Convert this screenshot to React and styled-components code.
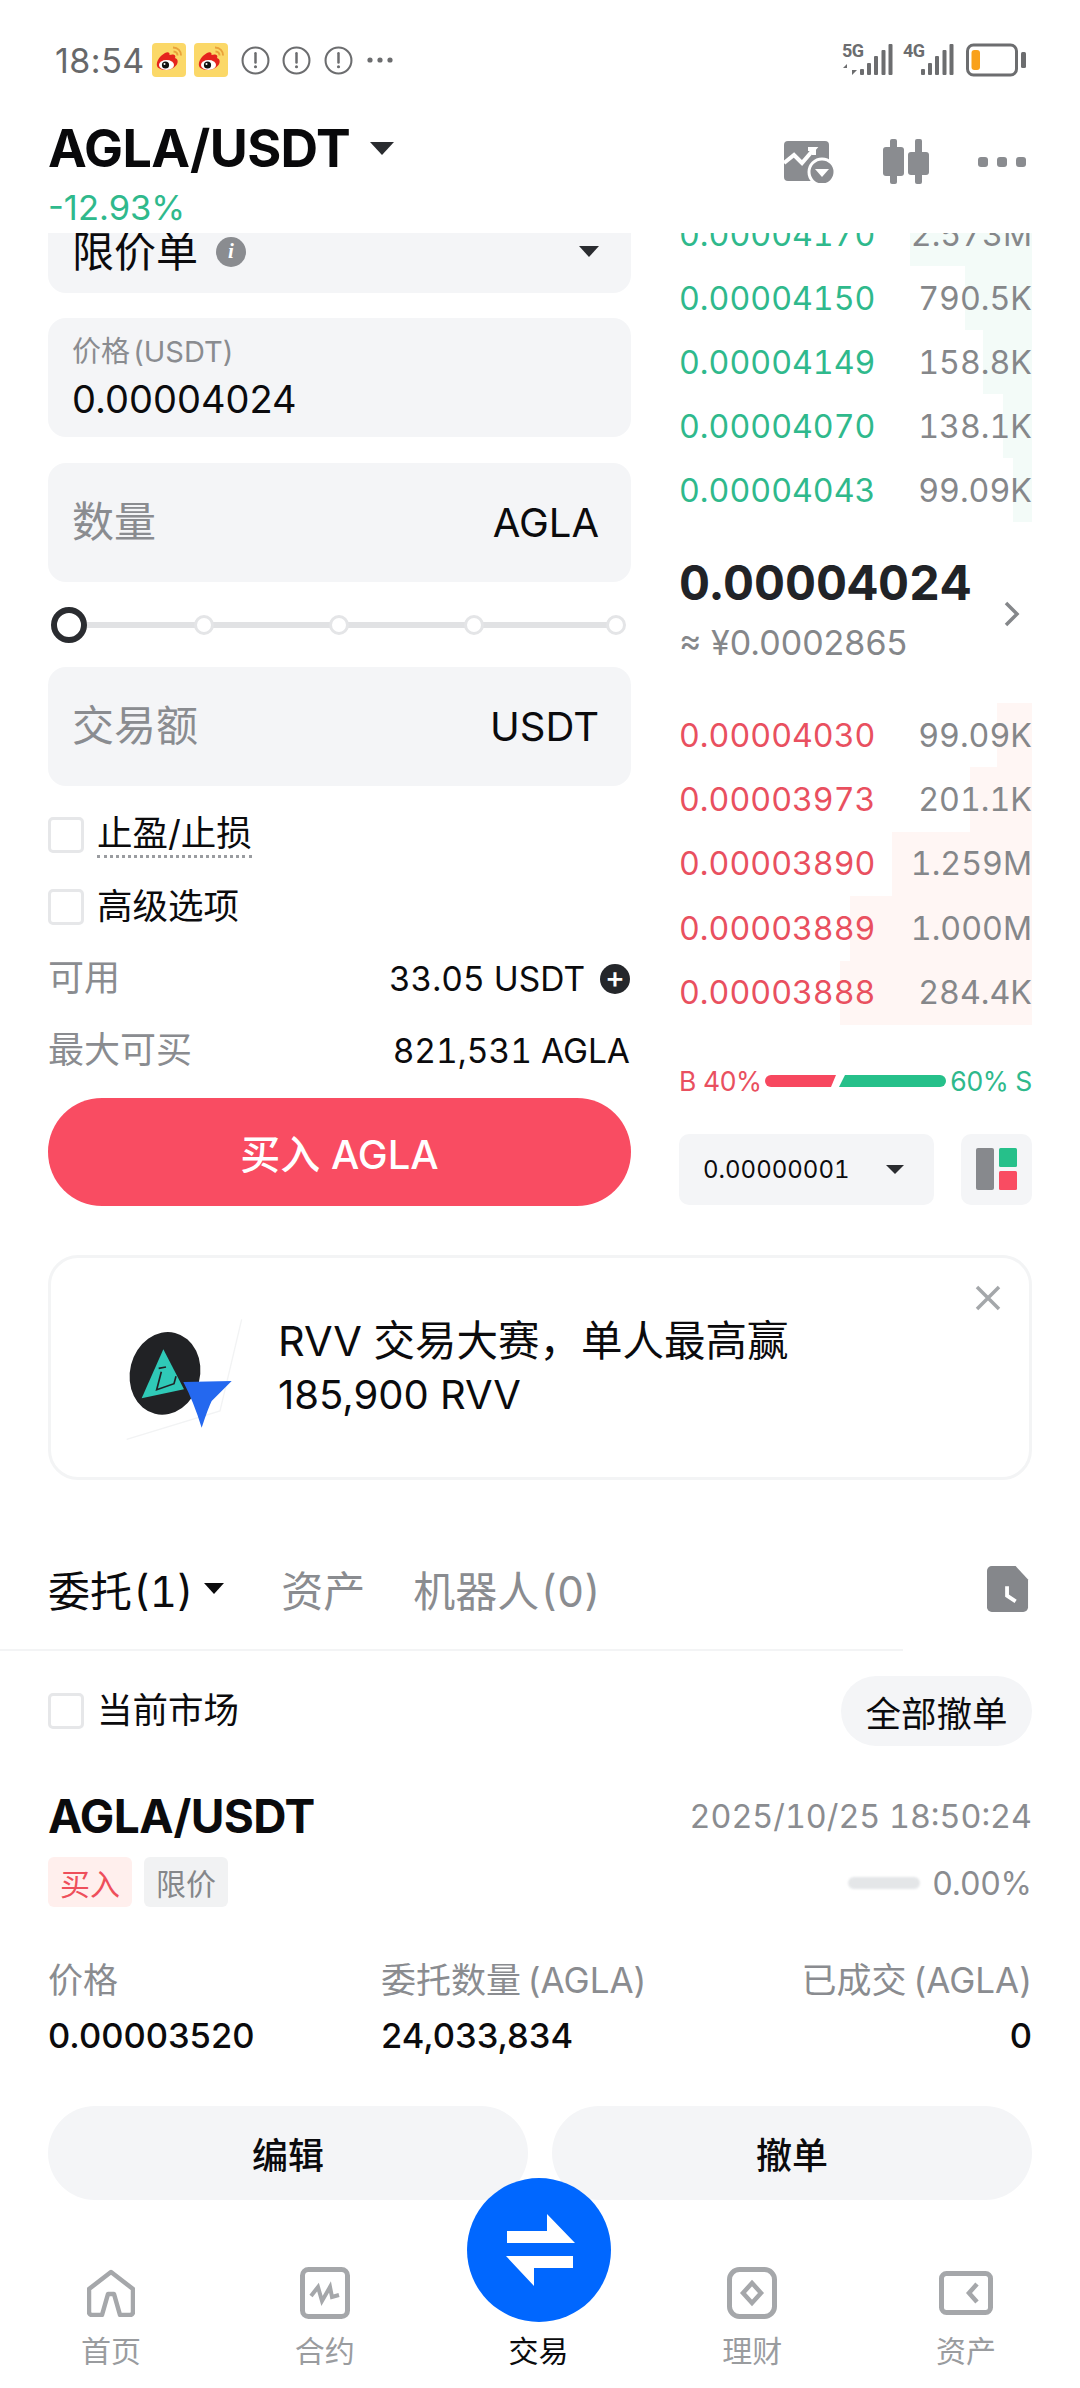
import React from 'react';
import styled, { createGlobalStyle } from 'styled-components';

const Global = createGlobalStyle`
  html, body { margin: 0; padding: 0; background: #fff; }
  * { box-sizing: border-box; }
  body { font-family: Inter, "Noto Sans CJK SC", sans-serif; color: #0b0b0d; }
`;
const Page = styled.div`width:1080px;height:2388px;overflow:hidden;background:#fff;display:flex;flex-direction:column;`;

const StatusBar = styled.div`height:120px;flex:none;display:flex;align-items:center;justify-content:space-between;padding:0 54px 0 55px;`;
const StatusLeft = styled.div`display:flex;align-items:center;`;
const Time = styled.span`font-size:34px;color:#67686a;width:97px;letter-spacing:.5px;`;
const StatusRight = styled.div`display:flex;align-items:center;`;
const NetGroup = styled.div`display:flex;align-items:flex-start;height:34px;margin-right:${p=>p.$mr}px;`;
const NetCol = styled.div`width:18px;display:flex;flex-direction:column;`;
const NetLabel = styled.span`font:700 18px/16px Roboto, sans-serif;color:#6c6d6f;letter-spacing:-.6px;white-space:nowrap;`;

const Header = styled.div`height:113px;flex:none;padding:0 54px 0 48px;display:flex;justify-content:space-between;`;
const HeaderLeft = styled.div`display:flex;flex-direction:column;`;
const PairRow = styled.div`display:flex;align-items:center;height:60px;margin-top:-2px;`;
const Pair = styled.span`font-size:52px;font-weight:700;letter-spacing:-.6px;color:#09090b;`;
const Caret = styled.span`
  width:0;height:0;display:inline-block;margin-left:${p=>p.$ml||0}px;
  border-left:${p=>p.$s}px solid transparent;border-right:${p=>p.$s}px solid transparent;
  border-top:${p=>Math.round(p.$s*1.05)}px solid ${p=>p.$c||'#2a2c30'};
`;
const Change = styled.span`font-size:34.500px;color:#2fb98c;margin-top:9px;line-height:42px;`;
const HeaderIcons = styled.div`display:flex;align-items:center;gap:49px;height:84px;`;

const Trade = styled.div`height:985px;flex:none;overflow:hidden;display:flex;gap:48px;padding:0 48px;`;
const FormCol = styled.div`width:583px;flex:none;margin-top:-15px;display:flex;flex-direction:column;`;
const BookCol = styled.div`width:353px;flex:none;margin-top:-31px;display:flex;flex-direction:column;`;

const OrderType = styled.div`height:75px;border-radius:0 0 18px 18px;background:#f4f5f7;display:flex;align-items:center;padding:0 32px 8px 24px;margin-bottom:25px;`;
const OrderTypeText = styled.span`font-size:42px;color:#0b0b0d;margin-right:18px;line-height:1;`;
const InfoDot = styled.span`width:30px;height:30px;border-radius:50%;background:#8a8c90;color:#fff;font:italic 700 21px "Liberation Serif",serif;display:flex;align-items:center;justify-content:center;margin-right:auto;`;
const Field = styled.div`height:119px;border-radius:18px;background:#f4f5f7;padding:0 32px 0 24px;display:flex;align-items:center;justify-content:space-between;`;
const PriceField = styled(Field)`flex-direction:column;align-items:flex-start;justify-content:center;margin-bottom:26px;`;
const FieldLabel = styled.span`font-size:29px;color:#8a8c90;line-height:38px;word-spacing:-5px;`;
const FieldValue = styled.span`font-size:38px;color:#0b0b0d;line-height:48px;margin-top:4px;`;
const Placeholder = styled.span`font-size:42px;color:#8a8c90;line-height:54px;margin-top:-1px;`;
const Unit = styled.span`font-size:40px;color:#0b0b0d;`;

const Slider = styled.div`
  height:85px;padding:0 6px 0 3px;display:flex;align-items:center;
  background:linear-gradient(#e1e2e4,#e1e2e4) 12px center / 560px 6px no-repeat;
`;
const Thumb = styled.span`width:36px;height:36px;border-radius:50%;background:#fff;border:6px solid #2a2c30;flex:none;`;
const Tick = styled.span`width:20px;height:20px;border-radius:50%;background:#fff;border:3px solid #e4e5e7;flex:none;margin-left:${p=>p.$gap}px;`;

const CheckRow = styled.div`display:flex;align-items:center;gap:13px;height:${p=>p.$h||72}px;margin-top:${p=>p.$mt||0}px;`;
const Box = styled.span`width:36px;height:36px;border-radius:5px;border:3px solid #e6e7e9;background:#fff;flex:none;`;
const CheckText = styled.span`font-size:35.500px;color:#0b0b0d;line-height:44px;${p=>p.$dotted&&'border-bottom:3px dotted #9a9ca0;line-height:42px;'}`;
const InfoRow = styled.div`display:flex;justify-content:space-between;align-items:center;height:72px;`;
const InfoLabel = styled.span`font-size:36px;color:#8a8c90;line-height:48px;margin-top:-2px;`;
const InfoValue = styled.span`font-size:33.500px;color:#0b0b0d;display:flex;align-items:center;gap:15px;font-variant-numeric:tabular-nums;padding-right:1px;`;
const Plus = styled.span`width:30px;height:30px;border-radius:50%;background:#25272b;color:#fff;font-size:30px;line-height:27px;text-align:center;font-weight:500;`;
const BuyButton = styled.div`height:108px;margin-top:11px;border-radius:54px;background:#f94c62;color:#fff;font-size:40px;font-weight:500;display:flex;align-items:center;justify-content:center;`;

const BookRows = styled.div`display:flex;flex-direction:column;`;
const BookRow = styled.div`
  height:${p=>p.$h}px;display:flex;align-items:center;justify-content:space-between;font-size:32.200px;font-variant-numeric:tabular-nums;
  background:linear-gradient(to left, ${p=>p.$bg} ${p=>p.$depth}px, transparent ${p=>p.$depth}px);
`;
const BookPrice = styled.span`color:${p=>p.$c};`;
const BookQty = styled.span`color:#85878a;`;
const Mid = styled.div`height:181px;display:flex;flex-direction:column;position:relative;padding-top:35px;`;
const MidPrice = styled.span`font-size:48px;font-weight:700;color:#212327;line-height:52px;font-variant-numeric:tabular-nums;`;
const MidSub = styled.span`font-size:34px;color:#85878a;line-height:40px;margin-top:14px;`;
const Chevron = styled.svg`position:absolute;right:12px;top:79px;`;
const Ratio = styled.div`height:109px;display:flex;align-items:center;justify-content:space-between;font-size:26.500px;padding-top:3px;`;
const RatioLabel = styled.span`color:${p=>p.$c};white-space:nowrap;letter-spacing:-.4px;`;
const BookTools = styled.div`display:flex;justify-content:space-between;height:71px;`;
const Tick2 = styled.div`width:255px;border-radius:10px;background:#f4f5f7;display:flex;align-items:center;justify-content:space-between;padding:0 30px 0 24px;`;
const Tick2Text = styled.span`font-size:24px;color:#0b0b0d;font-variant-numeric:tabular-nums;`;
const LayoutBtn = styled.div`width:71px;border-radius:10px;background:#f4f5f7;display:flex;align-items:center;justify-content:center;`;

const Ad = styled.div`height:225px;flex:none;margin:37px 48px 0;border:3px solid #f3f4f5;border-radius:30px;display:flex;align-items:center;position:relative;padding-left:49px;`;
const AdText = styled.div`display:flex;flex-direction:column;`;
const AdLine = styled.span`font-size:${p=>p.$size}px;line-height:54px;color:#0b0b0d;`;
const AdClose = styled.svg`position:absolute;top:27px;right:28px;`;
const LogoSvg = styled.svg`flex:none;margin-top:16px;`;

const Tabs = styled.div`height:169px;flex:none;padding:48px 51px 0 48px;display:flex;align-items:center;`;
const Tab = styled.span`font-size:42px;word-spacing:-10px;font-variant-numeric:tabular-nums;color:${p=>p.$on?'#0b0b0d':'#8a8c90'};margin-left:${p=>p.$ml||0}px;margin-right:${p=>p.$mr}px;`;
const TabFile = styled.svg`margin-left:auto;`;
const Divider = styled.div`width:903px;height:2px;background:#f3f4f5;flex:none;`;
const Filter = styled.div`height:70px;margin-top:25px;padding:0 48px;display:flex;align-items:center;justify-content:space-between;flex:none;`;
const Pill = styled.div`height:70px;width:191px;border-radius:35px;background:#f4f5f7;font-size:35.500px;display:flex;align-items:center;justify-content:center;`;

const Order = styled.div`padding:0 48px;flex:none;display:flex;flex-direction:column;`;
const OrderHead = styled.div`display:flex;justify-content:space-between;align-items:center;height:70px;margin-top:35px;`;
const OrderPair = styled.span`font-size:46px;font-weight:700;letter-spacing:-.6px;`;
const OrderDate = styled.span`font-size:32.300px;color:#8a8c90;font-variant-numeric:tabular-nums;`;
const OrderMeta = styled.div`display:flex;align-items:center;height:50px;margin-top:6px;gap:12px;`;
const Tag = styled.span`height:50px;width:84px;border-radius:6px;background:${p=>p.$bg};color:${p=>p.$c};font-size:30px;display:flex;align-items:center;justify-content:center;`;
const Progress = styled.div`margin-left:auto;display:flex;align-items:center;gap:12px;font-size:32px;color:#8a8c90;padding-top:2px;`;
const ProgressBar = styled.span`width:72px;height:12px;border-radius:6px;background:#e4e6e8;filter:blur(1px);`;
const Stats = styled.div`display:grid;grid-template-columns:333px 1fr auto;margin-top:50px;`;
const Stat = styled.div`display:flex;flex-direction:column;${p=>p.$right&&'align-items:flex-end;'}`;
const StatLabel = styled.span`font-size:35px;line-height:46px;color:#8a8c90;word-spacing:-3px;`;
const StatValue = styled.span`font-size:34.500px;line-height:46px;margin-top:10px;font-weight:500;`;
const Actions = styled.div`display:flex;gap:24px;margin-top:47px;`;
const Action = styled.div`flex:1;height:94px;border-radius:47px;background:#f4f5f7;font-size:36px;font-weight:500;display:flex;align-items:center;justify-content:center;`;

const Nav = styled.div`flex:1;display:flex;justify-content:space-between;padding:58px 64px 0 61px;position:relative;`;
const NavItem = styled.div`width:100px;display:flex;flex-direction:column;align-items:center;`;
const NavIcon = styled.div`height:70px;display:flex;align-items:center;justify-content:center;`;
const NavLabel = styled.span`font-size:30px;line-height:36px;margin-top:5px;color:${p=>p.$on?'#0b0b0d':'#9a9c9f'};`;
const SwapCircle = styled.div`position:absolute;left:467px;top:-22px;width:144px;height:144px;border-radius:50%;background:#0067ff;`;

const Weibo = ({mr}) => (
  <svg width="34" height="34" viewBox="0 0 34 34" style={{marginRight:mr}}>
    <rect width="34" height="34" rx="4" fill="#fbd868"/>
    <path d="M5 23c-1-5 3-10 8-13 3-1.500 5-.5 4.500 2 4-1.500 7 0 5.500 3 3 1 3.500 4 1.500 7-3 4-8 5.500-12 5-4-.5-7-2-7.500-4z" fill="#e5231d"/>
    <ellipse cx="14.500" cy="22" rx="7.500" ry="5" fill="#fff"/>
    <circle cx="13.500" cy="22" r="3.600" fill="#111"/>
    <circle cx="12.500" cy="21" r="1" fill="#fff"/>
    <path d="M21 4.500c5 .3 8 3.500 8 8M21.500 8.500c2.500.2 4 1.800 4 4" fill="none" stroke="#e9a23a" strokeWidth="2"/>
  </svg>
);
const Alert = ({mr}) => (
  <svg width="29" height="29" viewBox="0 0 28 28" style={{marginRight:mr}}>
    <circle cx="14" cy="14" r="12.500" fill="none" stroke="#6c6d6f" strokeWidth="2"/>
    <path d="M14 7v9" stroke="#6c6d6f" strokeWidth="2.400" strokeLinecap="round"/>
    <circle cx="14" cy="20" r="1.500" fill="#6c6d6f"/>
  </svg>
);
const MoreDots = () => (
  <svg width="26" height="6" viewBox="0 0 26 6">
    <circle cx="3" cy="3" r="2.600" fill="#6c6d6f"/><circle cx="13" cy="3" r="2.600" fill="#6c6d6f"/><circle cx="23" cy="3" r="2.600" fill="#6c6d6f"/>
  </svg>
);
const Bars = () => (
  <svg width="34" height="34" viewBox="0 0 34 34" fill="#6c6d6f">
    {[[0,6],[7,12],[14,19],[21.500,25],[28.500,31]].map(([x,h]) => (
      <rect key={x} x={x} y={32-h} width="4" height={h} rx="1"/>
    ))}
  </svg>
);
const Signal = ({label, first, mr}) => (
  <NetGroup $mr={mr}>
    <NetCol>
      <NetLabel>{label}</NetLabel>
      {first && <svg width="18" height="12" viewBox="0 0 18 12" style={{marginTop:4}}>
        <path d="M5 12V1L1 5h4zM10 0v12l5-5h-5z" fill="#6c6d6f"/>
      </svg>}
    </NetCol>
    <Bars />
  </NetGroup>
);
const Battery = () => (
  <svg width="60" height="34" viewBox="0 0 60 34">
    <rect x="1.500" y="2" width="49" height="30" rx="6" fill="#fff" stroke="#6c6d6f" strokeWidth="3"/>
    <rect x="5.500" y="7" width="8.500" height="20" rx="3" fill="#f9a11b"/>
    <rect x="55" y="9" width="5" height="16" rx="1.500" fill="#6c6d6f"/>
  </svg>
);
const ChartIcon = () => (
  <svg width="50" height="42" viewBox="0 0 50 42">
    <rect x="0" y="0" width="45" height="40" rx="4" fill="#8a8c90"/>
    <path d="M0 22l10-8 8 8 12-14h-6M30 8v6" fill="none" stroke="#fff" strokeWidth="4"/>
    <circle cx="38" cy="31" r="13" fill="#8a8c90" stroke="#fff" strokeWidth="3"/>
    <path d="M31 28h14l-7 8z" fill="#fff"/>
  </svg>
);
const CandleIcon = () => (
  <svg width="46" height="46" viewBox="0 0 46 46" fill="#8a8c90">
    <rect x="7" y="0" width="7" height="45" rx="2"/><rect x="0" y="8" width="21" height="29" rx="3"/>
    <rect x="32" y="0" width="7" height="45" rx="2"/><rect x="25" y="13" width="21" height="23" rx="3"/>
  </svg>
);
const HeadDots = () => (
  <svg width="48" height="10" viewBox="0 0 48 10" fill="#8a8c90">
    <rect x="0" y="0" width="10" height="10" rx="3"/><rect x="19" y="0" width="10" height="10" rx="3"/><rect x="38" y="0" width="10" height="10" rx="3"/>
  </svg>
);
const LayoutIcon = () => (
  <svg width="41" height="42" viewBox="0 0 41 42">
    <rect x="0" y="0" width="18" height="42" rx="2" fill="#87898d"/>
    <rect x="23" y="0" width="18" height="19" rx="1.500" fill="#26c08a"/>
    <rect x="23" y="23" width="18" height="19" rx="1.500" fill="#f94c62"/>
  </svg>
);
const AdLogo = () => (
  <LogoSvg width="178" height="150" viewBox="0 0 534 450">
    <path d="M425 55 L360 330 L80 415" fill="none" stroke="#f2f3f4" strokeWidth="4"/>
    <ellipse cx="195" cy="217" rx="105" ry="125" transform="rotate(14 195 217)" fill="#212225"/>
    <path d="M190 145 L252 265 L125 292 Z" fill="#2fc9b7"/>
    <path d="M176 202 L198 198 M184 212 L170 266 L222 248 L228 226" fill="none" stroke="#212225" strokeWidth="5"/>
    <path d="M250 243 L395 240 L335 300 Q325 320 305 380 Q280 300 250 243 Z" fill="#2468ef"/>
  </LogoSvg>
);

const buys = [['0.00004170','2.573M',122],['0.00004150','790.5K',67],['0.00004149','158.8K',49],['0.00004070','138.1K',29],['0.00004043','99.09K',19]];
const sells = [['0.00004030','99.09K',35],['0.00003973','201.1K',62],['0.00003890','1.259M',140],['0.00003889','1.000M',182],['0.00003888','284.4K',192]];

export default function App() {
  return (
    <Page>
      <Global />
      <StatusBar>
        <StatusLeft>
          <Time>18:54</Time>
          <Weibo mr={8} /><Weibo mr={13} /><Alert mr={12} /><Alert mr={13} /><Alert mr={14} />
          <MoreDots />
        </StatusLeft>
        <StatusRight>
          <Signal label="5G" first mr={9} /><Signal label="4G" mr={11} />
          <Battery />
        </StatusRight>
      </StatusBar>
      <Header>
        <HeaderLeft>
          <PairRow><Pair>AGLA/USDT</Pair><Caret $s={12} $ml={20} /></PairRow>
          <Change>-12.93%</Change>
        </HeaderLeft>
        <HeaderIcons><ChartIcon /><CandleIcon /><HeadDots /></HeaderIcons>
      </Header>
      <Trade>
        <FormCol>
          <OrderType>
            <OrderTypeText>限价单</OrderTypeText>
            <InfoDot>i</InfoDot>
            <Caret $s={10} />
          </OrderType>
          <PriceField>
            <FieldLabel>价格 (USDT)</FieldLabel>
            <FieldValue>0.00004024</FieldValue>
          </PriceField>
          <Field><Placeholder>数量</Placeholder><Unit>AGLA</Unit></Field>
          <Slider><Thumb /><Tick $gap={107} /><Tick $gap={115} /><Tick $gap={115} /><Tick $gap={122} /></Slider>
          <Field><Placeholder>交易额</Placeholder><Unit>USDT</Unit></Field>
          <CheckRow $h={72} $mt={13}><Box /><CheckText $dotted>止盈/止损</CheckText></CheckRow>
          <CheckRow $h={72}><Box /><CheckText>高级选项</CheckText></CheckRow>
          <InfoRow><InfoLabel>可用</InfoLabel><InfoValue>33.05 USDT<Plus>+</Plus></InfoValue></InfoRow>
          <InfoRow><InfoLabel>最大可买</InfoLabel><InfoValue>821,531 AGLA</InfoValue></InfoRow>
          <BuyButton>买入 AGLA</BuyButton>
        </FormCol>
        <BookCol>
          <BookRows>
            {buys.map(([p,q,d]) => (
              <BookRow key={p} $h={64} $bg="#f3fbf8" $depth={d}><BookPrice $c="#2fb98c">{p}</BookPrice><BookQty>{q}</BookQty></BookRow>
            ))}
          </BookRows>
          <Mid>
            <MidPrice>0.00004024</MidPrice>
            <MidSub>≈ ¥0.0002865</MidSub>
            <Chevron width="16" height="26" viewBox="0 0 16 26"><path d="M2 2l11 11L2 24" fill="none" stroke="#85878a" strokeWidth="3.500"/></Chevron>
          </Mid>
          <BookRows>
            {sells.map(([p,q,d]) => (
              <BookRow key={p} $h={64.4} $bg="#fff6f4" $depth={d}><BookPrice $c="#e9505f">{p}</BookPrice><BookQty>{q}</BookQty></BookRow>
            ))}
          </BookRows>
          <Ratio>
            <RatioLabel $c="#e9505f">B 40%</RatioLabel>
            <svg width="182" height="14" viewBox="0 0 182 14" style={{flex:'none'}}>
              <path d="M6 1H71L66 13H6a6 6 0 010-12z" fill="#f7485f"/>
              <path d="M80 1H175a6 6 0 010 12H74z" fill="#26c08a"/>
            </svg>
            <RatioLabel $c="#2fb98c">60% S</RatioLabel>
          </Ratio>
          <BookTools>
            <Tick2><Tick2Text>0.00000001</Tick2Text><Caret $s={9} /></Tick2>
            <LayoutBtn><LayoutIcon /></LayoutBtn>
          </BookTools>
        </BookCol>
      </Trade>
      <Ad>
        <AdLogo />
        <AdText>
          <AdLine $size={41.5}>RVV 交易大赛，单人最高赢</AdLine>
          <AdLine $size={40}>185,900 RVV</AdLine>
        </AdText>
        <AdClose width="26" height="26" viewBox="0 0 26 26"><path d="M2 2l22 22M24 2L2 24" stroke="#a4a7aa" strokeWidth="3.500"/></AdClose>
      </Ad>
      <Tabs>
        <Tab $on $mr={11}>委托 (1)</Tab>
        <Caret $s={10} $c="#0b0b0d" />
        <Tab $ml={57} $mr={48}>资产</Tab>
        <Tab $mr={0}>机器人 (0)</Tab>
        <TabFile width="42" height="48" viewBox="0 0 44 48">
          <path d="M5 0H30L43 14V43a5 5 0 01-5 5H5a5 5 0 01-5-5V5a5 5 0 015-5z" fill="#85878b"/>
          <path d="M21 21V31L30 37" fill="none" stroke="#fff" strokeWidth="4"/>
        </TabFile>
      </Tabs>
      <Divider />
      <Filter>
        <CheckRow $h={70}><Box /><CheckText>当前市场</CheckText></CheckRow>
        <Pill>全部撤单</Pill>
      </Filter>
      <Order>
        <OrderHead><OrderPair>AGLA/USDT</OrderPair><OrderDate>2025/10/25 18:50:24</OrderDate></OrderHead>
        <OrderMeta>
          <Tag $bg="#ffefed" $c="#ee4f5b">买入</Tag>
          <Tag $bg="#f1f2f3" $c="#85878a">限价</Tag>
          <Progress><ProgressBar />0.00%</Progress>
        </OrderMeta>
        <Stats>
          <Stat><StatLabel>价格</StatLabel><StatValue>0.00003520</StatValue></Stat>
          <Stat><StatLabel>委托数量 (AGLA)</StatLabel><StatValue>24,033,834</StatValue></Stat>
          <Stat $right><StatLabel>已成交 (AGLA)</StatLabel><StatValue>0</StatValue></Stat>
        </Stats>
        <Actions><Action>编辑</Action><Action>撤单</Action></Actions>
      </Order>
      <Nav>
        <SwapCircle>
          <svg width="144" height="144" viewBox="0 0 144 144" fill="#fff">
            <path d="M40 53H80V36L108 65H40Z"/>
            <path d="M39 78H106V90H67V108Z"/>
          </svg>
        </SwapCircle>
        <NavItem>
          <NavIcon><svg width="48" height="48" viewBox="0 0 48 48" fill="none" stroke="#a5a7aa" strokeWidth="4.500" strokeLinejoin="round"><path d="M24 3L46 20V43a3 3 0 01-3 3H33L27 25H21L15 46H5a3 3 0 01-3-3V20Z"/></svg></NavIcon>
          <NavLabel>首页</NavLabel>
        </NavItem>
        <NavItem>
          <NavIcon><svg width="50" height="52" viewBox="0 0 50 52" fill="none" stroke="#a5a7aa"><rect x="2.500" y="2.500" width="45" height="47" rx="6" strokeWidth="5"/><path d="M11 29l7-9 4 14 8-14 2 10 7-2" strokeWidth="4"/></svg></NavIcon>
          <NavLabel>合约</NavLabel>
        </NavItem>
        <NavItem>
          <NavIcon />
          <NavLabel $on>交易</NavLabel>
        </NavItem>
        <NavItem>
          <NavIcon><svg width="50" height="52" viewBox="0 0 50 52" fill="none" stroke="#a5a7aa"><rect x="2.500" y="2.500" width="45" height="47" rx="10" strokeWidth="5"/><path d="M25 16l9 10-9 10-9-10z" strokeWidth="4.500"/></svg></NavIcon>
          <NavLabel>理财</NavLabel>
        </NavItem>
        <NavItem>
          <NavIcon><svg width="54" height="44" viewBox="0 0 54 44" fill="none" stroke="#a5a7aa"><rect x="2.500" y="2.500" width="49" height="39" rx="5" strokeWidth="5"/><path d="M38 13l-8 9 8 9" strokeWidth="4.500"/></svg></NavIcon>
          <NavLabel>资产</NavLabel>
        </NavItem>
      </Nav>
    </Page>
  );
}
